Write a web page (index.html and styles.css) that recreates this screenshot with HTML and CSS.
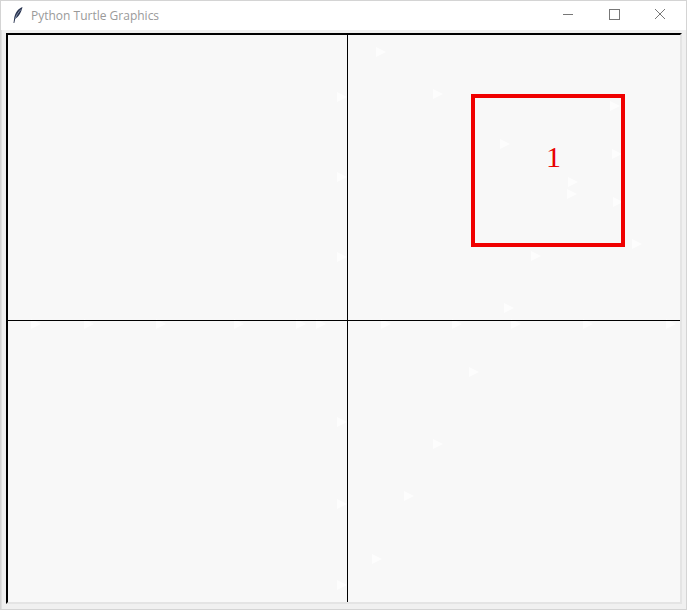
FILE: index.html
```html
<!DOCTYPE html>
<html>
<head>
<meta charset="utf-8">
<link rel="stylesheet" href="styles.css">
</head>
<body>
<div class="window">
  <div class="titlebar">
    <svg class="feather" width="12" height="18" viewBox="0 0 12 18">
      <path d="M10.5 1 C6 2.5 3 7 2.2 12 L1.5 17 L2.3 17 L3.2 13 C6.5 11 9.5 6 10.5 1 Z" fill="#2a3550"/>
      <path d="M9 3.5 C6.5 6 4.5 9 3.3 12.6" stroke="#a9b6d0" stroke-width="0.7" fill="none"/>
    </svg>
    <span class="title">Python Turtle Graphics</span>
    <div class="controls">
      <svg class="ctl" width="46" height="30" viewBox="0 0 46 30"><path d="M18 14.5 H28" stroke="#777" stroke-width="1"/></svg>
      <svg class="ctl" width="46" height="30" viewBox="0 0 46 30"><rect x="18.5" y="9.5" width="10" height="10" stroke="#777" stroke-width="1" fill="none"/></svg>
      <svg class="ctl" width="46" height="30" viewBox="0 0 46 30"><path d="M18 9 L28 19 M28 9 L18 19" stroke="#777" stroke-width="1"/></svg>
    </div>
  </div>
  <div class="frame">
    <div class="canvas">
      <span class="stamp" style="left:368px;top:12px"></span>
      <span class="stamp" style="left:425px;top:54px"></span>
      <span class="stamp" style="left:492px;top:104px"></span>
      <span class="stamp" style="left:560px;top:142px"></span>
      <span class="stamp" style="left:559px;top:154px"></span>
      <span class="stamp" style="left:602px;top:66px"></span>
      <span class="stamp" style="left:604px;top:114px"></span>
      <span class="stamp" style="left:605px;top:162px"></span>
      <span class="stamp" style="left:624px;top:204px"></span>
      <span class="stamp" style="left:523px;top:216px"></span>
      <span class="stamp" style="left:496px;top:268px"></span>
      <span class="stamp" style="left:329px;top:57px"></span>
      <span class="stamp" style="left:329px;top:137px"></span>
      <span class="stamp" style="left:329px;top:217px"></span>
      <span class="stamp" style="left:23px;top:284px"></span>
      <span class="stamp" style="left:76px;top:284px"></span>
      <span class="stamp" style="left:148px;top:284px"></span>
      <span class="stamp" style="left:226px;top:284px"></span>
      <span class="stamp" style="left:288px;top:284px"></span>
      <span class="stamp" style="left:308px;top:284px"></span>
      <span class="stamp" style="left:373px;top:284px"></span>
      <span class="stamp" style="left:444px;top:284px"></span>
      <span class="stamp" style="left:503px;top:284px"></span>
      <span class="stamp" style="left:575px;top:284px"></span>
      <span class="stamp" style="left:658px;top:284px"></span>
      <span class="stamp" style="left:461px;top:332px"></span>
      <span class="stamp" style="left:425px;top:404px"></span>
      <span class="stamp" style="left:396px;top:456px"></span>
      <span class="stamp" style="left:364px;top:519px"></span>
      <span class="stamp" style="left:329px;top:382px"></span>
      <span class="stamp" style="left:329px;top:464px"></span>
      <span class="stamp" style="left:329px;top:545px"></span>
      <div class="hline"></div>
      <div class="vline"></div>
      <div class="box"><span class="num">1</span></div>
    </div>
  </div>
</div>
</body>
</html>
```

FILE: styles.css
```css
html, body {
  margin: 0;
  padding: 0;
  background: #ffffff;
}
.window {
  width: 687px;
  height: 610px;
  box-sizing: border-box;
  border: 1px solid #d4d4d4;
  background: #f0f0f0;
  display: flex;
  flex-direction: column;
  overflow: hidden;
}
.titlebar {
  height: 29px;
  flex: none;
  background: #ffffff;
  display: flex;
  align-items: center;
  font-family: "Open Sans", "Noto Sans", sans-serif;
}
.feather {
  margin-left: 11px;
  margin-top: -2px;
}
.title {
  margin-left: 7px;
  font-size: 12px;
  color: #9a9a9a;
  margin-top: -1px;
}
.controls {
  margin-left: auto;
  display: flex;
  margin-right: 3px;
  margin-top: -2px;
}
.ctl {
  display: block;
}
.frame {
  flex: 1;
  padding: 3px 5px 5px 4px;
  background: #f0f0f0;
  border-left: 1px solid #e0e0e0;
}
.canvas {
  position: relative;
  width: 676px;
  height: 571px;
  box-sizing: border-box;
  background: #f8f8f8;
  border-top: 2px solid #000;
  border-left: 2px solid #000;
  border-right: 2px solid #e4e4e4;
  border-bottom: 2px solid #e4e4e4;
  overflow: hidden;
}
.hline {
  position: absolute;
  left: 0;
  top: 285px;
  width: 672px;
  height: 1px;
  background: #000;
}
.vline {
  position: absolute;
  left: 339px;
  top: 0;
  width: 1px;
  height: 567px;
  background: #000;
}
.box {
  position: absolute;
  left: 463px;
  top: 59px;
  width: 154px;
  height: 153px;
  box-sizing: border-box;
  border: 4px solid #f00000;
  display: flex;
  justify-content: center;
  padding-top: 44px;
}
.num {
  font-family: "Liberation Serif", "DejaVu Serif", serif;
  font-size: 30px;
  line-height: 1;
  color: #e80000;
  margin-left: 11px;
}
.stamp {
  position: absolute;
  width: 0;
  height: 0;
  border-top: 5px solid transparent;
  border-bottom: 5px solid transparent;
  border-left: 10px solid #ffffff;
  opacity: 0.75;
}
```
